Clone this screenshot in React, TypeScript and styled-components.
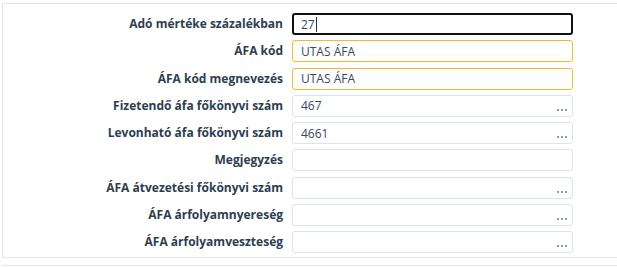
import React from "react";
import styled, { createGlobalStyle, css } from "styled-components";

const GlobalStyle = createGlobalStyle`
  html, body {
    margin: 0;
    padding: 0;
    background: #ffffff;
    font-family: "Open Sans", "Liberation Sans", sans-serif;
  }
`;

const Page = styled.div`
  padding: 3px 0 0 2px;
  width: 617px;
  height: 267px;
  overflow: hidden;
  box-sizing: border-box;
`;

const Panel = styled.div`
  width: 640px;
  box-sizing: border-box;
  border: 1px solid #e2e6eb;
  border-right: none;
  padding: 9px 0 4px 0;
`;

const NextPanel = styled.div`
  width: 640px;
  margin-top: 7px;
  border-top: 1px solid #e2e6eb;
  height: 10px;
`;

const Form = styled.div`
  display: grid;
  grid-template-columns: 280px 281px;
  column-gap: 9px;
  row-gap: 5.25px;
  align-items: center;
`;

const Label = styled.div`
  text-align: right;
  font-size: 12px;
  font-weight: 700;
  color: #2c3e50;
  white-space: nowrap;
  line-height: 22px;
`;

type Variant = "focused" | "required" | "normal";

const Field = styled.div<{ $variant: Variant }>`
  position: relative;
  height: 22px;
  box-sizing: border-box;
  border-radius: 3px;
  display: flex;
  align-items: center;
  padding-left: 8px;
  font-size: 12px;
  color: #34495e;
  background: #ffffff;
  border: 1px solid #dde3ea;
  ${(p) =>
    p.$variant === "focused" &&
    css`
      border: 2px solid #111111;
      padding-left: 7px;
    `}
  ${(p) =>
    p.$variant === "required" &&
    css`
      border: 1px solid #f5b92d;
    `}
`;

const Caret = styled.span`
  display: inline-block;
  width: 1px;
  height: 15px;
  background: #1c3550;
  margin-left: 1px;
`;

const Dots = styled.span`
  position: absolute;
  right: 5px;
  bottom: 5px;
  display: flex;
  gap: 2px;
`;

const Dot = styled.span`
  width: 2px;
  height: 2px;
  background: #8e9db0;
`;

type Row = {
  label: string;
  value?: string;
  variant?: Variant;
  lookup?: boolean;
};

const rows: Row[] = [
  { label: "Adó mértéke százalékban", value: "27", variant: "focused" },
  { label: "ÁFA kód", value: "UTAS ÁFA", variant: "required" },
  { label: "ÁFA kód megnevezés", value: "UTAS ÁFA", variant: "required" },
  { label: "Fizetendő áfa főkönyvi szám", value: "467", lookup: true },
  { label: "Levonható áfa főkönyvi szám", value: "4661", lookup: true },
  { label: "Megjegyzés" },
  { label: "ÁFA átvezetési főkönyvi szám", lookup: true },
  { label: "ÁFA árfolyamnyereség", lookup: true },
  { label: "ÁFA árfolyamveszteség", lookup: true },
];

export default function App() {
  return (
    <>
      <GlobalStyle />
      <Page>
        <Panel>
          <Form>
            {rows.map((r) => (
              <React.Fragment key={r.label}>
                <Label>{r.label}</Label>
                <Field $variant={r.variant ?? "normal"}>
                  {r.value}
                  {r.variant === "focused" && <Caret />}
                  {r.lookup && (
                    <Dots>
                      <Dot />
                      <Dot />
                      <Dot />
                    </Dots>
                  )}
                </Field>
              </React.Fragment>
            ))}
          </Form>
        </Panel>
        <NextPanel />
      </Page>
    </>
  );
}
